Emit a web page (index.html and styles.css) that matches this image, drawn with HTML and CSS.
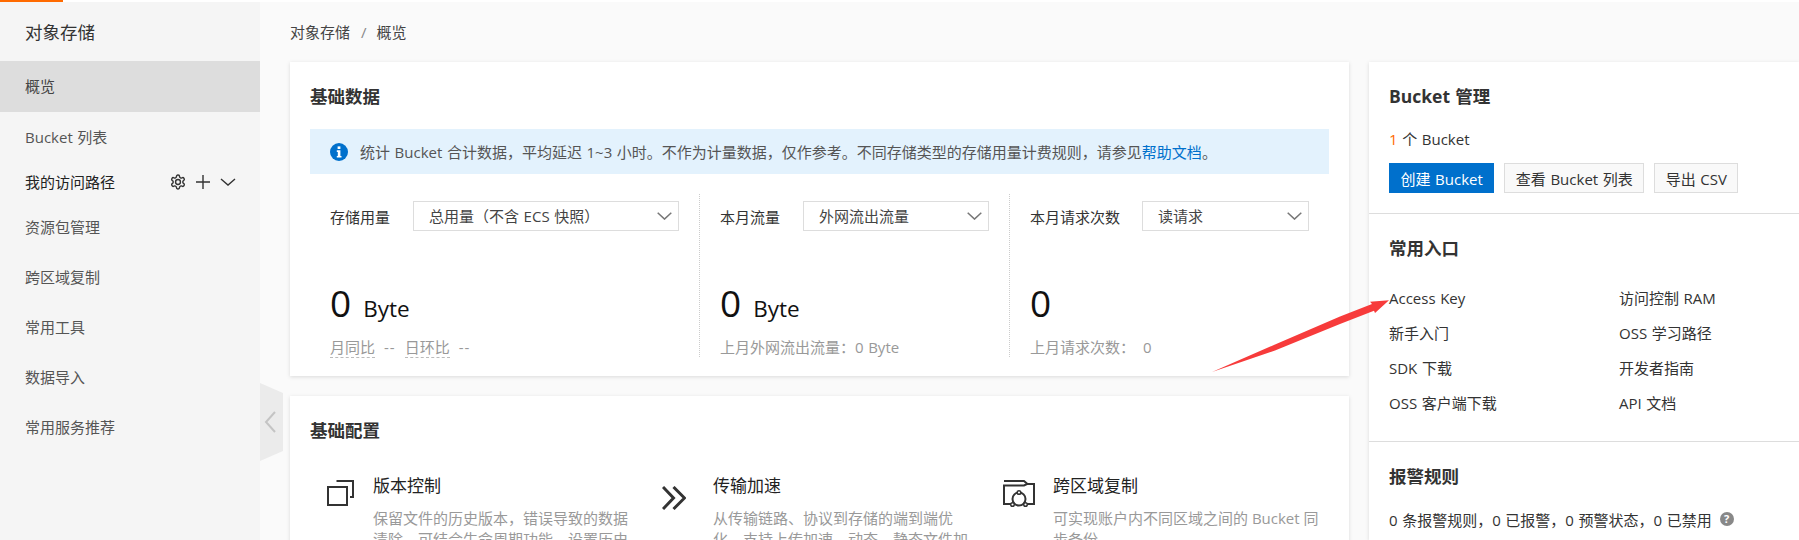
FILE: index.html
```html
<!DOCTYPE html>
<html lang="zh-CN">
<head>
    <meta charset="UTF-8">
    <title>对象存储</title>
    <link rel="stylesheet" href="styles.css">
</head>
<body>
    <div class="topbar"><div class="topbar-mark"></div></div>
    <div class="page">
        <div class="sidebar">
            <div class="sidebar-title">对象存储</div>
            <ul class="nav-links">
                <li class="active">概览</li>
                <li>Bucket 列表</li>
                <li class="nav-group">
                    <span>我的访问路径</span>
                    <span class="nav-tools">
                        <svg class="tool-icon" viewBox="2 2 20 20"><path d="M12.22 2h-.44a2 2 0 0 0-2 2v.18a2 2 0 0 1-1 1.73l-.43.25a2 2 0 0 1-2 0l-.15-.08a2 2 0 0 0-2.73.73l-.22.38a2 2 0 0 0 .73 2.73l.15.1a2 2 0 0 1 1 1.72v.51a2 2 0 0 1-1 1.74l-.15.09a2 2 0 0 0-.73 2.73l.22.38a2 2 0 0 0 2.73.73l.15-.08a2 2 0 0 1 2 0l.43.25a2 2 0 0 1 1 1.73V20a2 2 0 0 0 2 2h.44a2 2 0 0 0 2-2v-.18a2 2 0 0 1 1-1.73l.43-.25a2 2 0 0 1 2 0l.15.08a2 2 0 0 0 2.73-.73l.22-.39a2 2 0 0 0-.73-2.73l-.15-.08a2 2 0 0 1-1-1.74v-.5a2 2 0 0 1 1-1.74l.15-.09a2 2 0 0 0 .73-2.73l-.22-.38a2 2 0 0 0-2.73-.73l-.15.08a2 2 0 0 1-2 0l-.43-.25a2 2 0 0 1-1-1.73V4a2 2 0 0 0-2-2z"/><circle cx="12" cy="12" r="3.500"/></svg>
                        <svg class="tool-icon" viewBox="0 0 14 14"><path class="thin" d="M0 7h14M7 0v14"/></svg>
                        <svg class="tool-icon" viewBox="0 0 14 14"><path class="thin" d="M0 4l7 6 7-6"/></svg>
                    </span>
                </li>
                <li>资源包管理</li>
                <li>跨区域复制</li>
                <li>常用工具</li>
                <li>数据导入</li>
                <li>常用服务推荐</li>
            </ul>
        </div>
        <div class="container-section">
            <div class="breadcrumb">
                <span>对象存储</span><span class="breadcrumb-sep">/</span><span>概览</span>
            </div>
            <div class="columns">
                <div class="main-column">
                    <div class="card card-data">
                        <h2 class="card-title">基础数据</h2>
                        <div class="alert">
                            <svg class="alert-icon" viewBox="0 0 18 18"><circle cx="9" cy="9" r="9" fill="#0070cc"/><rect x="7.6" y="3.4" width="2.8" height="2.6" fill="#fff"/><path d="M6.8 7.3h3.6v5.6h1.1v1.6H6.8v-1.6h1V8.9h-1z" fill="#fff"/></svg>
                            <span>统计 Bucket 合计数据，平均延迟 1~3 小时。不作为计量数据，仅作参考。不同存储类型的存储用量计费规则，请参见<a href="#">帮助文档</a>。</span>
                        </div>
                        <div class="stats">
                            <div class="stat">
                                <div class="stat-filter">
                                    <span class="stat-label">存储用量</span>
                                    <div class="select">总用量（不含 ECS 快照）<svg viewBox="0 0 15 8"><path d="M.7.7l6.8 6.4L14.300.7"/></svg></div>
                                </div>
                                <div class="stat-value">0<span class="stat-unit">Byte</span></div>
                                <div class="stat-note"><span class="dashed">月同比</span><span class="note-dash">--</span><span class="dashed">日环比</span><span class="note-dash">--</span></div>
                            </div>
                            <div class="stat">
                                <div class="stat-filter">
                                    <span class="stat-label">本月流量</span>
                                    <div class="select">外网流出流量<svg viewBox="0 0 15 8"><path d="M.7.7l6.8 6.4L14.300.7"/></svg></div>
                                </div>
                                <div class="stat-value">0<span class="stat-unit">Byte</span></div>
                                <div class="stat-note">上月外网流出流量：0 Byte</div>
                            </div>
                            <div class="stat">
                                <div class="stat-filter">
                                    <span class="stat-label">本月请求次数</span>
                                    <div class="select">读请求<svg viewBox="0 0 15 8"><path d="M.7.7l6.8 6.4L14.300.7"/></svg></div>
                                </div>
                                <div class="stat-value">0</div>
                                <div class="stat-note">上月请求次数：<span class="note-count">0</span></div>
                            </div>
                        </div>
                    </div>
                    <div class="card">
                        <h2 class="card-title">基础配置</h2>
                        <div class="features">
                            <div class="feature">
                                <div class="feature-icon">
                                    <svg class="icon-version" viewBox="0 0 27 26"><path d="M1 7h19v18H1z"/><path d="M9.500 1H26v16h-3"/></svg>
                                </div>
                                <div>
                                    <div class="feature-name">版本控制</div>
                                    <div class="feature-desc">保留文件的历史版本，错误导致的数据清除，可结合生命周期功能，设置历史版本的保存时间。</div>
                                </div>
                            </div>
                            <div class="feature">
                                <div class="feature-icon">
                                    <svg class="icon-speed" viewBox="0 0 24 24"><path d="M1 1l10.500 11L1 23M11.500 1L22.500 12l-11 11"/></svg>
                                </div>
                                <div>
                                    <div class="feature-name">传输加速</div>
                                    <div class="feature-desc">从传输链路、协议到存储的端到端优化，支持上传加速、动态、静态文件加速。</div>
                                </div>
                            </div>
                            <div class="feature">
                                <div class="feature-icon">
                                    <svg class="icon-replica" viewBox="0 0 33 28"><path d="M11 24H2V5.500h20l3-1.500h7v20H23"/><path class="thin" d="M2 1h20l3.500 3"/><circle cx="17" cy="19" r="6.500"/><circle class="dot" cx="17" cy="12.500" r="1.800"/><circle class="dot" cx="10.500" cy="24.500" r="1.800"/><circle class="dot" cx="23.500" cy="24.500" r="1.800"/></svg>
                                </div>
                                <div>
                                    <div class="feature-name">跨区域复制</div>
                                    <div class="feature-desc">可实现账户内不同区域之间的 Bucket 同步备份。</div>
                                </div>
                            </div>
                        </div>
                    </div>
                </div>
                <div class="side-panel">
                    <div class="panel-section">
                        <h2 class="card-title">Bucket 管理</h2>
                        <div class="bucket-count"><span class="count-num">1</span> 个 Bucket</div>
                        <div class="button-container">
                            <button class="primary-button">创建 Bucket</button>
                            <button class="plain-button">查看 Bucket 列表</button>
                            <button class="plain-button">导出 CSV</button>
                        </div>
                    </div>
                    <div class="panel-section">
                        <h2 class="card-title">常用入口</h2>
                        <div class="entry-links">
                            <a href="#">Access Key</a>
                            <a href="#">访问控制 RAM</a>
                            <a href="#">新手入门</a>
                            <a href="#">OSS 学习路径</a>
                            <a href="#">SDK 下载</a>
                            <a href="#">开发者指南</a>
                            <a href="#">OSS 客户端下载</a>
                            <a href="#">API 文档</a>
                        </div>
                    </div>
                    <div class="panel-section">
                        <h2 class="card-title">报警规则</h2>
                        <div class="alarm-line">0 条报警规则，0 已报警，0 预警状态，0 已禁用<span class="help-badge">?</span></div>
                    </div>
                </div>
            </div>
        </div>
    </div>

    <!-- collapse handle and the red arrow sit on top of the page -->
    <svg class="collapse-handle" viewBox="0 0 23 78"><path class="handle-bg" d="M0 0l23 10v58L0 78z"/><path class="handle-arrow" d="M15 29l-9 10 9 10"/></svg>
    <svg class="red-arrow" viewBox="0 0 180 74"><path d="M1 73L64 45.500 129 17.500 161 5 159 2.700 178 1.300 164 14 163 11.700 129 25 64 51.500z"/></svg>
</body>
</html>
```

FILE: styles.css
```css
* {
    box-sizing: border-box;
}
body {
    font-family: "Open Sans", "Noto Sans CJK SC", sans-serif;
    font-size: 15px;
    word-spacing: 0.7px;
    margin: 0;
    padding: 0;
    height: 540px;
    overflow: hidden;
    background-color: #fafafa;
    color: #333;
    position: relative;
}
a {
    text-decoration: none;
}
.topbar {
    height: 2px;
    background-color: #fff;
}
.topbar-mark {
    width: 63px;
    height: 2px;
    background-color: #ff6a00;
}
.page {
    display: flex;
    height: 538px;
}
.sidebar {
    width: 260px;
    flex-shrink: 0;
    background-color: #f5f5f5;
}
.sidebar-title {
    height: 59px;
    line-height: 60px;
    padding-left: 25px;
    font-size: 17.500px;
    color: #333;
}
.nav-links {
    list-style: none;
    margin: 0;
    padding: 0;
}
.nav-links li {
    height: 50px;
    line-height: 50px;
    padding: 0 25px;
    color: #555;
}
.nav-links li.active {
    height: 51px;
    line-height: 51px;
    background-color: #ddd;
    color: #444;
}
.nav-links li.nav-group {
    height: 40px;
    line-height: 40px;
    display: flex;
    align-items: center;
    justify-content: space-between;
    color: #222;
}
.nav-tools {
    display: flex;
    align-items: center;
    gap: 11px;
}
.tool-icon {
    width: 14px;
    height: 14px;
    fill: none;
    stroke: #333;
    stroke-width: 2;
    overflow: visible;
}
.tool-icon .thin {
    stroke-width: 1.400;
}
.container-section {
    flex: 1;
    padding-left: 30px;
    min-width: 0;
}
.breadcrumb {
    height: 60px;
    line-height: 60px;
    font-size: 15px;
    color: #444;
}
.breadcrumb-sep {
    margin: 0 10px 0 11px;
    color: #888;
}
.columns {
    display: flex;
    gap: 20px;
    align-items: flex-start;
}
.main-column {
    width: 1059px;
    flex-shrink: 0;
}
.card {
    background-color: #fff;
    box-shadow: 0 1px 4px rgba(0, 0, 0, 0.13);
    padding: 0 20px;
    height: 200px;
}
.card-data {
    height: 314px;
    margin-bottom: 20px;
}
.card-title {
    margin: 0;
    height: 67px;
    line-height: 68px;
    font-size: 17.500px;
    font-weight: 700;
    color: #333;
}
.alert {
    height: 45px;
    display: flex;
    align-items: center;
    padding-left: 20px;
    background-color: #e3f2fd;
    color: #555;
}
.alert a {
    color: #0070cc;
}
.alert-icon {
    width: 18px;
    height: 18px;
    margin-right: 12px;
    flex-shrink: 0;
}
.stats {
    display: grid;
    grid-template-columns: 390px 310px 319px;
    margin-top: 20px;
    height: 162px;
}
.stat {
    padding: 7px 20px 0;
    border-right: 1px dotted #ccc;
}
.stat:last-child {
    border-right: none;
}
.stat-filter {
    display: flex;
    align-items: center;
}
.stat-label {
    margin-right: 23px;
    flex-shrink: 0;
}
.stat:last-child .stat-label {
    margin-right: 22px;
}
.select {
    flex: 1;
    height: 30px;
    line-height: 28px;
    padding-left: 15px;
    border: 1px solid #ddd;
    background-color: #fff;
    color: #444;
    display: flex;
    justify-content: space-between;
    align-items: center;
}
.select svg {
    width: 15px;
    height: 8px;
    margin-right: 6px;
    fill: none;
    stroke: #777;
    stroke-width: 1.500;
}
.stat-value {
    margin-top: 47px;
    height: 50px;
    line-height: 50px;
    font-size: 37px;
    color: #111;
}
.stat-unit {
    font-size: 22.500px;
    margin-left: 12px;
}
.stat-note {
    margin-top: 9px;
    height: 20px;
    line-height: 20px;
    color: #999;
    white-space: nowrap;
}
.dashed {
    display: inline-block;
    height: 21px;
    border-bottom: 1px dashed #bbb;
}
.note-dash {
    margin: 0 9px 0 9px;
    letter-spacing: 1px;
}
.note-count {
    margin-left: 8px;
}
.features {
    display: grid;
    grid-template-columns: 340px 340px 339px;
    margin-top: 1px;
}
.feature {
    display: flex;
    padding-right: 10px;
}
.feature-icon {
    width: 63px;
    flex-shrink: 0;
    padding-top: 16px;
}
.feature-icon svg {
    display: block;
    fill: none;
    stroke: #333;
}
.icon-version {
    width: 27px;
    height: 26px;
    margin-left: 17px;
    stroke-width: 2;
}
.icon-speed {
    width: 24px;
    height: 24px;
    margin: 6px 0 0 12px;
    stroke-width: 3;
}
.icon-replica {
    width: 33px;
    height: 28px;
    margin-left: 12px;
    stroke-width: 2;
}
.icon-replica .dot {
    fill: #fff;
    stroke-width: 1.500;
}
.feature-name {
    height: 24px;
    line-height: 24px;
    margin-top: 10px;
    font-size: 17px;
    color: #222;
}
.feature-desc {
    margin-top: 10px;
    line-height: 21px;
    color: #999;
    word-spacing: 0;
}
.side-panel {
    flex: 1;
    height: 478px;
    background-color: #fff;
    box-shadow: 0 1px 4px rgba(0, 0, 0, 0.13);
}
.panel-section {
    padding: 0 20px 20px;
    border-bottom: 1px solid #ddd;
}
.panel-section:last-child {
    border-bottom: none;
}
.bucket-count {
    height: 20px;
    line-height: 20px;
    color: #333;
}
.count-num {
    color: #ff6a00;
}
.button-container {
    display: flex;
    gap: 10px;
    margin-top: 14px;
}
.primary-button,
.plain-button {
    font: inherit;
    word-spacing: inherit;
    height: 30px;
    padding: 0 10.500px;
    border-radius: 0;
    cursor: pointer;
}
.primary-button {
    background-color: #0070cc;
    border: 1px solid #0070cc;
    color: #fff;
}
.plain-button {
    background-color: #f9f9f9;
    border: 1px solid #ddd;
    color: #333;
}
.entry-links {
    display: grid;
    grid-template-columns: 230px 1fr;
    grid-auto-rows: 35px;
    line-height: 35px;
}
.entry-links a {
    color: #333;
}
.alarm-line {
    display: flex;
    align-items: center;
    height: 20px;
    color: #333;
}
.help-badge {
    width: 14px;
    height: 14px;
    line-height: 14px;
    margin-left: 8px;
    border-radius: 50%;
    background-color: #888;
    color: #fff;
    font-size: 11px;
    font-weight: 700;
    text-align: center;
}
.collapse-handle {
    position: absolute;
    left: 260px;
    top: 383px;
    width: 23px;
    height: 78px;
}
.handle-bg {
    fill: #ebebeb;
}
.handle-arrow {
    fill: none;
    stroke: #c4c4c4;
    stroke-width: 2;
}
.red-arrow {
    position: absolute;
    left: 1211px;
    top: 299px;
    width: 180px;
    height: 74px;
}
.red-arrow path {
    fill: #f73b3b;
}
```
